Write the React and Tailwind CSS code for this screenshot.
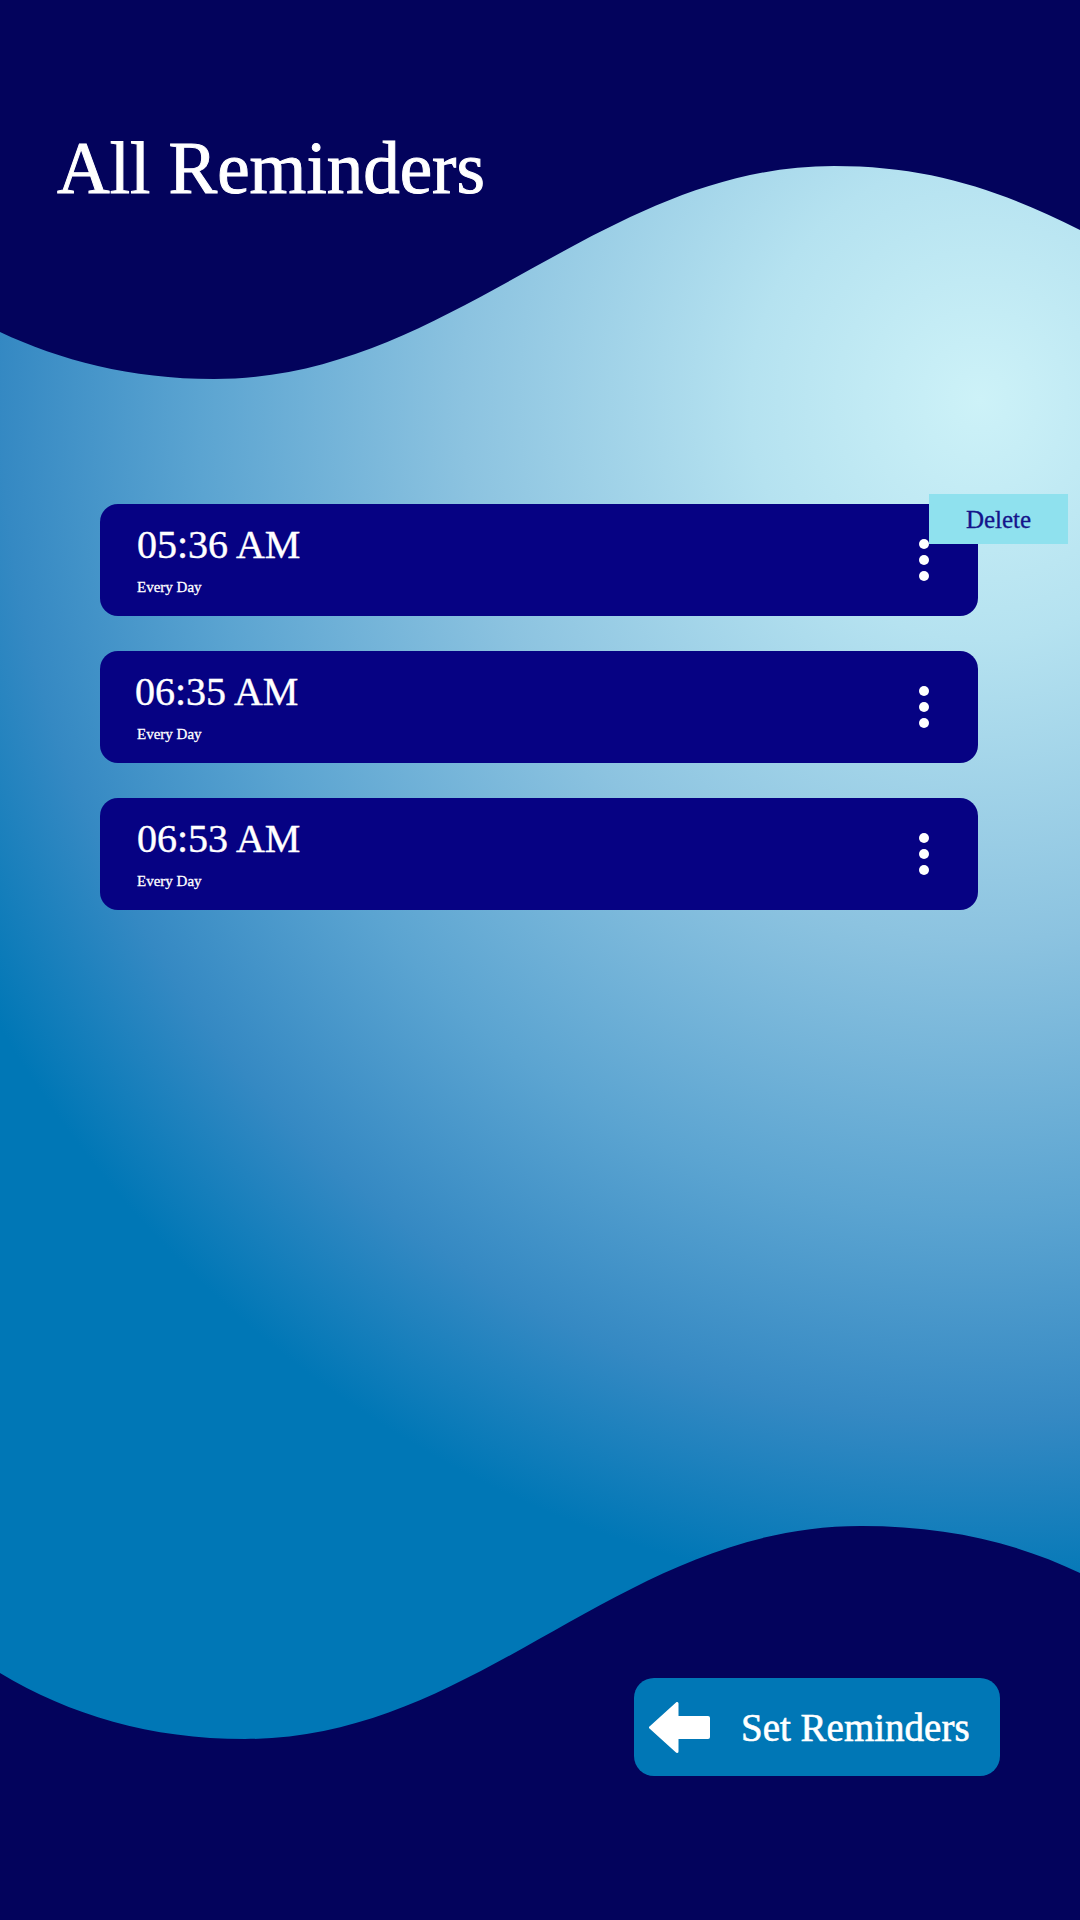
import React from "react";

const reminders = [
  { time: "05:36 AM", repeat: "Every Day", menuOpen: true, nudge: false },
  { time: "06:35 AM", repeat: "Every Day", menuOpen: false, nudge: true },
  { time: "06:53 AM", repeat: "Every Day", menuOpen: false, nudge: false },
];

// background waves (top + bottom navy shapes)
function Waves() {
  return (
    <svg className="absolute inset-0 w-[1080px] h-[1920px]" viewBox="0 0 1080 1920" fill="none">
      <path
        d="M0 0H1080V230C1000 190 930 166 834 166C600 166 450 379 214 379C130 379 60 360 0 332Z"
        fill="#03035c"
      />
      <path
        d="M0 1673C70 1715 150 1739 245 1739C480 1739 620 1526 861 1526C945 1526 1015 1542 1080 1573V1920H0Z"
        fill="#03035c"
      />
    </svg>
  );
}

function Dots() {
  return (
    <div className="flex flex-col gap-[6px]">
      <span className="block w-[10px] h-[10px] rounded-full bg-white" />
      <span className="block w-[10px] h-[10px] rounded-full bg-white" />
      <span className="block w-[10px] h-[10px] rounded-full bg-white" />
    </div>
  );
}

function ReminderCard({ item }) {
  return (
    <div className="relative w-[878px] h-[112px] rounded-[18px] bg-[#060283] flex items-center justify-between pl-[37px] pr-[49px]">
      <div className="flex flex-col self-start pt-[21px]">
        <span className={(item.nudge ? "-ml-[2px] " : "") + "text-[40px] leading-none text-white [-webkit-text-stroke:0.4px_#fff]"}>
          {item.time}
        </span>
        <span className="mt-[15px] text-[15px] leading-none text-white [-webkit-text-stroke:0.3px_#fff]">{item.repeat}</span>
      </div>
      <Dots />
      {item.menuOpen && (
        <div className="absolute left-[829px] top-[-10px] w-[139px] h-[50px] bg-[#8fe1ee] flex items-center justify-center text-[25px] leading-none text-[#14148a] [-webkit-text-stroke:0.3px_#14148a]">
          Delete
        </div>
      )}
    </div>
  );
}

function BackArrow() {
  return (
    <svg width="61" height="51" viewBox="0 0 61 51">
      <path d="M1.5 25.5L28 1.5V49.5Z" fill="#fff" stroke="#fff" strokeWidth="3" strokeLinejoin="round" />
      <rect x="26" y="14" width="35" height="23" rx="2" fill="#fff" />
    </svg>
  );
}

export default function App() {
  return (
    <div className="relative w-[1080px] h-[1920px] overflow-hidden font-['Liberation_Serif',serif] bg-[radial-gradient(1150px_1200px_at_980px_400px,#cdf2f8_0%,#b5e2f0_20%,#8cc3e0_45%,#5ba4d1_68%,#3589c3_85%,#0077b6_100%)]">
      <Waves />
      <div className="relative flex flex-col h-full">
        <h1 className="pt-[132px] pl-[57px] text-[73px] leading-none text-white [-webkit-text-stroke:1px_#fff]">All Reminders</h1>

        <div className="mt-[299px] ml-[100px] flex flex-col gap-[35px]">
          {reminders.map((r) => (
            <ReminderCard key={r.time} item={r} />
          ))}
        </div>

        <button className="mt-auto mb-[144px] mr-[80px] self-end w-[366px] h-[98px] rounded-[20px] bg-[#0077b6] flex items-center pl-[15px]">
          <BackArrow />
          <span className="ml-[31px] text-[39px] leading-none text-white [-webkit-text-stroke:0.6px_#fff]">Set Reminders</span>
        </button>
      </div>
    </div>
  );
}
